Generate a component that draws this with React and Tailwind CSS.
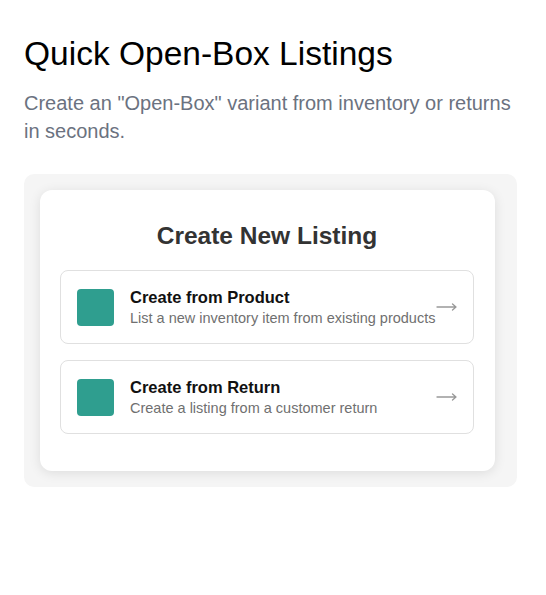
import React from "react";

const options = [
  {
    title: "Create from Product",
    desc: "List a new inventory item from existing products",
  },
  {
    title: "Create from Return",
    desc: "Create a listing from a customer return",
  },
];

function Arrow() {
  return (
    <svg width="22" height="10" viewBox="0 0 22 10" className="shrink-0 text-[#999]">
      <path d="M1 5h19M16.5 2l3.5 3-3.5 3" fill="none" stroke="currentColor" strokeWidth="1.3" strokeLinecap="round" strokeLinejoin="round" />
    </svg>
  );
}

export default function App() {
  return (
    <div
      className="min-h-screen bg-white pl-6 pr-[29px] pt-[35px]"
      style={{ fontFamily: '"Liberation Sans", Arial, sans-serif' }}
    >
      <h1 className="text-[33.5px] leading-[38px] text-black">Quick Open-Box Listings</h1>
      <p className="mt-[16px] text-[20px] leading-[28px] text-[#6b7280]">
        Create an "Open-Box" variant from inventory or returns in seconds.
      </p>

      <div className="mt-[29px] rounded-[10px] bg-[#f5f5f5] p-4">
        <div className="w-[455px] rounded-xl bg-white pl-5 pr-[21px] pt-[32px] pb-[37px] shadow-[0_2px_12px_rgba(0,0,0,0.1)]">
          <h2 className="mb-5 text-center text-[24.5px] font-bold leading-[28px] text-[#333]">
            Create New Listing
          </h2>
          <div className="flex flex-col gap-4">
            {options.map((o) => (
              <div
                key={o.title}
                className="flex items-center rounded-lg border border-[#e0e0e0] bg-white py-4 pl-4 pr-[15px]"
              >
                <div className="h-[37px] w-[37px] shrink-0 rounded-[4px] bg-[#2f9e8f]" />
                <div className="ml-4 flex-1">
                  <div className="text-[16.5px] font-bold leading-[20px] text-[#111]">{o.title}</div>
                  <div className="mt-[3px] text-[14.5px] leading-[17px] text-[#707070]">{o.desc}</div>
                </div>
                <Arrow />
              </div>
            ))}
          </div>
        </div>
      </div>
    </div>
  );
}
